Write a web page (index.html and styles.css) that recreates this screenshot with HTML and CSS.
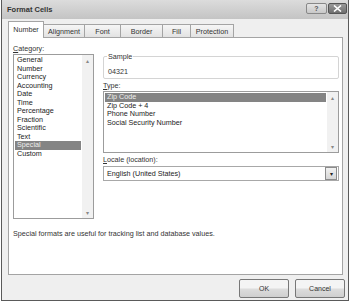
FILE: index.html
```html
<!DOCTYPE html>
<html lang="en">
<head>
    <meta charset="UTF-8">
    <title>Format Cells</title>
    <link rel="stylesheet" href="styles.css">
</head>
<body>
    <div class="window">
        <div class="titlebar">
            <span class="title">Format Cells</span>
            <div class="caption-buttons">
                <span class="cap-btn help">?</span>
                <span class="cap-btn close">
                    <svg width="9" height="7" viewBox="0 0 9 7"><path d="M1 0.5 L8 6.5 M8 0.5 L1 6.5" stroke="#fff" stroke-width="1.6"/></svg>
                </span>
            </div>
        </div>

        <div class="body">
            <div class="tabs">
                <span class="tab active w-number">Number</span>
                <span class="tab w-align">Alignment</span>
                <span class="tab w-font">Font</span>
                <span class="tab w-border">Border</span>
                <span class="tab w-fill">Fill</span>
                <span class="tab w-prot">Protection</span>
            </div>

            <div class="panel">
                <div class="columns">
                    <div class="left">
                        <div class="label"><u>C</u>ategory:</div>
                        <div class="listbox category">
                            <ul class="items">
                                <li>General</li>
                                <li>Number</li>
                                <li>Currency</li>
                                <li>Accounting</li>
                                <li>Date</li>
                                <li>Time</li>
                                <li>Percentage</li>
                                <li>Fraction</li>
                                <li>Scientific</li>
                                <li>Text</li>
                                <li class="selected">Special</li>
                                <li>Custom</li>
                            </ul>
                            <div class="scrollbar">
                                <span class="arrow">&#9652;</span>
                                <span class="arrow">&#9662;</span>
                            </div>
                        </div>
                    </div>

                    <div class="right">
                        <div class="groupbox">
                            <span class="legend">Sample</span>
                            <div class="sample">04321</div>
                        </div>

                        <div class="label"><u>T</u>ype:</div>
                        <div class="listbox type">
                            <ul class="items">
                                <li class="selected">Zip Code</li>
                                <li>Zip Code + 4</li>
                                <li>Phone Number</li>
                                <li>Social Security Number</li>
                            </ul>
                            <div class="scrollbar">
                                <span class="arrow">&#9652;</span>
                                <span class="arrow">&#9662;</span>
                            </div>
                        </div>

                        <div class="label"><u>L</u>ocale (location):</div>
                        <div class="combo">
                            <span class="combo-text">English (United States)</span>
                            <span class="combo-btn">&#9662;</span>
                        </div>
                    </div>
                </div>

                <p class="description">Special formats are useful for tracking list and database values.</p>
            </div>

            <div class="buttons">
                <button type="button" class="btn">OK</button>
                <button type="button" class="btn">Cancel</button>
            </div>
        </div>
    </div>
</body>
</html>
```

FILE: styles.css
```css
body {
    margin: 0;
    background: #fff;
    font-family: "Liberation Sans", Arial, sans-serif;
    font-size: 7.2px;
    color: #222;
}

.window {
    width: 346px;
    height: 300px;
    margin-left: 1px;
    border: 1px solid #5a5a5a;
    border-top: none;
    background: #e8e8e8;
    display: flex;
    flex-direction: column;
}

/* Title bar */
.titlebar {
    height: 19px;
    display: flex;
    align-items: center;
    justify-content: space-between;
    padding: 0 1px 0 5px;
    background: linear-gradient(#dcdcdc, #c4c4c4);
}

.title {
    font-weight: bold;
    font-size: 7.5px;
    color: #333;
}

.caption-buttons {
    display: flex;
    gap: 1px;
    margin-top: -3px;
}

.cap-btn {
    height: 9px;
    display: flex;
    align-items: center;
    justify-content: center;
    border: 1px solid #888;
    border-radius: 2px;
}

.help {
    width: 19px;
    background: linear-gradient(#e4e4e4, #c8c8c8);
    color: #555;
    font-size: 7px;
    font-weight: bold;
}

.close {
    width: 17px;
    background: linear-gradient(#9a9a9a, #6e6e6e);
    border-color: #555;
}

/* Body */
.body {
    flex: 1;
    padding: 2px 3px 0 6px;
    background: #efefef;
    display: flex;
    flex-direction: column;
}

.tabs {
    display: flex;
    align-items: flex-end;
    height: 16px;
    position: relative;
    z-index: 1;
}

.tab {
    height: 13px;
    display: flex;
    align-items: center;
    justify-content: center;
    border: 1px solid #a4a4a4;
    border-bottom: none;
    margin-right: -1px;
    background: linear-gradient(#f6f6f6, #e2e2e2);
    color: #333;
    box-sizing: border-box;
}

.tab.active {
    height: 17px;
    background: #fff;
    margin-bottom: -1px;
    padding-bottom: 2px;
}

.w-number { width: 36px; }
.w-align { width: 42px; }
.w-font { width: 37px; }
.w-border { width: 43px; }
.w-fill { width: 29px; }
.w-prot { width: 44px; }

.panel {
    height: 238px;
    background: #fff;
    border: 1px solid #a4a4a4;
    padding: 6px 3px 0 4px;
    box-sizing: border-box;
    width: 335px;
}

.columns {
    display: flex;
    gap: 9px;
}

.left {
    width: 81px;
}

.right {
    flex: 1;
    padding-top: 12px;
}

.label {
    height: 9px;
    line-height: 9px;
    color: #333;
}

.label u {
    text-decoration: underline;
}

.listbox {
    display: flex;
    border: 1px solid #9c9c9c;
    box-sizing: border-box;
    background: #fff;
}

.listbox.category {
    height: 165px;
    margin-top: 1px;
}

.listbox.type {
    height: 62px;
    margin-top: 1px;
    margin-bottom: 2px;
}

.items {
    list-style: none;
    margin: 0;
    padding: 1px 1px 0 1px;
    flex: 1;
}

.items li {
    height: 8.5px;
    line-height: 8.5px;
    padding-left: 2px;
    color: #222;
}

.items li.selected {
    background: #848484;
    color: #eee;
}

.scrollbar {
    width: 11px;
    background: #f1f1f1;
    display: flex;
    flex-direction: column;
    justify-content: space-between;
    align-items: center;
    color: #888;
    font-size: 6px;
    padding: 2px 0;
}

.groupbox {
    border: 1px solid #d4d4d4;
    border-radius: 2px;
    height: 23px;
    position: relative;
    padding: 10px 0 0 4px;
    box-sizing: border-box;
    margin-bottom: 2px;
}

.legend {
    position: absolute;
    top: -5px;
    left: 3px;
    background: #fff;
    padding: 0 1px;
    color: #333;
}

.sample {
    color: #333;
}

.combo {
    height: 15px;
    margin-top: 2px;
    border: 1px solid #a8a8a8;
    display: flex;
    align-items: center;
    justify-content: space-between;
    padding: 0 1px 0 3px;
    box-sizing: border-box;
    width: 236px;
}

.combo-btn {
    width: 10px;
    height: 11px;
    border: 1px solid #8c8c8c;
    background: linear-gradient(#f2f2f2, #d6d6d6);
    font-size: 6px;
    display: flex;
    align-items: center;
    justify-content: center;
    color: #222;
}

.description {
    margin: 10px 0 0 0;
    color: #333;
}

/* Buttons */
.buttons {
    display: flex;
    justify-content: flex-end;
    gap: 6px;
    padding: 4px 0 0 0;
}

.btn {
    width: 50px;
    height: 19px;
    font-family: inherit;
    font-size: 7px;
    color: #333;
    border: 1px solid #777;
    border-radius: 2px;
    background: linear-gradient(#f4f4f4 45%, #dcdcdc 55%, #cfcfcf);
    padding: 0;
}
```
